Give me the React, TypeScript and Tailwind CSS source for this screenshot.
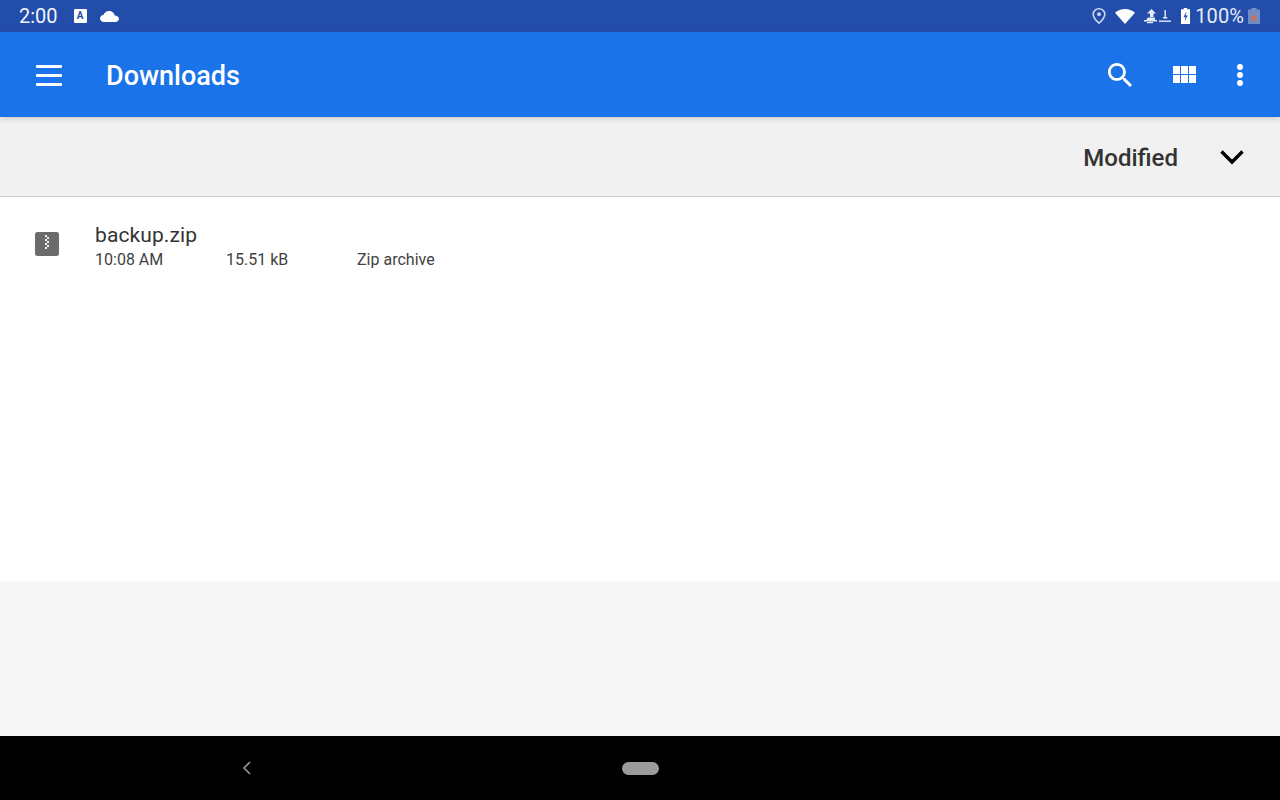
const font = { roboto: 'font-["Roboto",sans-serif]' };

function StatusIcons() {
  return (
    <div className="flex items-center">
      {/* location pin */}
      <svg width="14" height="16" viewBox="0 0 14 16" className="mr-[9px]" fill="none">
        <path d="M7 .8C3.700.8 1.200 3.200 1.200 6.200 1.200 10 7 15.200 7 15.200s5.800-5.200 5.800-9C12.800 3.200 10.300.8 7 .8z" stroke="#cdd8ee" strokeWidth="1.600" />
        <circle cx="7" cy="6.200" r="1.900" fill="#cdd8ee" />
      </svg>
      {/* wifi */}
      <svg width="20" height="15" viewBox="0 0 20 15" className="mr-[8px]">
        <path d="M0 3.800C2.600 1.400 6.100 0 10 0s7.400 1.400 10 3.800L10 15z" fill="#fff" />
      </svg>
      {/* data up / down */}
      <svg width="28" height="16" viewBox="0 0 28 16" className="mr-[10px]" fill="#e6ebf6">
        <path d="M8.500 1l4.500 4.500h-2.500V9H7V5.500H4z" />
        <path d="M1 12h2.500c.3-1.500 1-2.500 2-2.500h6.500V12h2v1.500H1z" />
        <rect x="4" y="14" width="6" height="1.200" />
        <rect x="21.500" y="2" width="1.400" height="8" />
        <rect x="20" y="9" width="4.300" height="1.500" />
        <rect x="16" y="12.500" width="12" height="1.400" />
      </svg>
      {/* charging battery */}
      <svg width="9" height="16" viewBox="0 0 9 16" className="mr-[5px]">
        <path d="M2.800 0h3.400v1.300H9V16H0V1.300h2.800z" fill="#fff" />
        <path d="M5.500 3.500L2.500 9h2l-.7 4L6.800 7.500H4.700z" fill="#234dab" />
      </svg>
      <span className={`${font.roboto} mr-[4px] text-[20px] leading-none tracking-[0.1px] text-[#e6ebf6]`}>100%</span>
      {/* second battery */}
      <svg width="12" height="16" viewBox="0 0 12 16">
        <path d="M3.500 0h5v1.500H12V16H0V1.500h3.500z" fill="#6f8cc4" />
        <path d="M4 7.500l4 5M8 7.500l-4 5" stroke="#e8683a" strokeWidth="1.600" />
      </svg>
    </div>
  );
}

function StatusBar() {
  return (
    <div className="flex h-8 shrink-0 items-center justify-between bg-[#234dab] pl-[19px] pr-[20px]">
      <div className="flex items-center">
        <span className={`${font.roboto} mr-[16px] text-[20px] leading-none text-[#f2f4fa]`}>2:00</span>
        {/* keyboard badge */}
        <span className={`${font.roboto} mr-[13px] flex h-[14px] w-[13px] items-center justify-center rounded-[1px] bg-white text-[10px] font-bold leading-none text-[#234dab]`}>
          A
        </span>
        {/* cloud */}
        <svg width="19" height="11" viewBox="0 0 19 11">
          <path d="M4 11C1.800 11 0 9.400 0 7.500 0 5.600 1.600 4.200 3.400 4 4.200 1.700 6.400 0 9 0c3 0 5.300 2 5.700 4.400C17 4.500 19 5.900 19 7.800 19 9.600 17.300 11 15.300 11z" fill="#fff" />
        </svg>
      </div>
      <StatusIcons />
    </div>
  );
}

function AppBar() {
  return (
    <div className="relative z-10 flex h-[85px] shrink-0 items-center bg-[#1a73e8] pl-[36px] pr-[37px] text-white shadow-[0_2px_5px_rgba(0,0,0,0.15)]">
      <div className="mt-[1px] flex w-[26px] shrink-0 flex-col gap-[6px]">
        <span className="h-[3px] rounded-[1px] bg-white" />
        <span className="h-[3px] rounded-[1px] bg-white" />
        <span className="h-[3px] rounded-[1px] bg-white" />
      </div>
      <h1 className={`${font.roboto} ml-[44px] mt-[4px] flex-1 text-[27px] font-medium leading-none`}>Downloads</h1>
      <svg width="24" height="24" viewBox="3 3 17.5 17.5" fill="#fff" className="mr-[41px]">
        <path d="M15.500 14h-.79l-.28-.27C15.410 12.590 16 11.110 16 9.500 16 5.910 13.090 3 9.500 3S3 5.910 3 9.500 5.910 16 9.500 16c1.610 0 3.090-.59 4.230-1.570l.27.28v.79l5 4.990L20.490 19l-4.990-5zm-6 0C7.010 14 5 11.990 5 9.500S7.010 5 9.500 5 14 7.010 14 9.500 11.990 14 9.500 14z" />
      </svg>
      <svg width="23" height="17" viewBox="0 0 23 17" fill="#fff" className="mr-[41px]">
        <rect x="0" y="0" width="7" height="8" />
        <rect x="8" y="0" width="7" height="8" />
        <rect x="16" y="0" width="7" height="8" />
        <rect x="0" y="9" width="7" height="8" />
        <rect x="8" y="9" width="7" height="8" />
        <rect x="16" y="9" width="7" height="8" />
      </svg>
      <div className="flex flex-col gap-[2px]">
        <span className="h-[6px] w-[6px] rounded-full bg-white" />
        <span className="h-[6px] w-[6px] rounded-full bg-white" />
        <span className="h-[6px] w-[6px] rounded-full bg-white" />
      </div>
    </div>
  );
}

function SortBar() {
  return (
    <div className="flex h-[80px] shrink-0 items-center justify-end border-b border-[#cfcfcf] bg-[#f1f1f1] pr-[35px]">
      <span className={`${font.roboto} mr-[41px] mt-[2px] text-[24px] font-medium leading-none text-[#333]`}>Modified</span>
      <svg width="26" height="16" viewBox="0 0 26 16" fill="none">
        <path d="M2.500 2.500L13 13 23.500 2.500" stroke="#000" strokeWidth="3.400" />
      </svg>
    </div>
  );
}

function ZipIcon() {
  return (
    <svg width="24" height="24" viewBox="0 0 24 24" className="mt-[9px] shrink-0">
      <rect width="24" height="24" rx="2.500" fill="#6b6b6b" />
      <g fill="#f2f2f2">
        <rect x="10" y="3" width="2" height="2" />
        <rect x="12" y="5" width="2" height="2" />
        <rect x="10" y="7" width="2" height="2" />
        <rect x="12" y="9" width="2" height="2" />
        <rect x="10" y="11" width="2" height="2" />
        <rect x="12" y="13" width="2" height="2" />
        <rect x="10" y="15" width="2" height="2" />
      </g>
    </svg>
  );
}

function FileRow() {
  return (
    <div className="flex items-start pl-[35px] pt-[26px]">
      <ZipIcon />
      <div className={`${font.roboto} ml-[36px] text-[#333]`}>
        <div className="text-[21px] leading-[24px] tracking-[0.1px]">backup.zip</div>
        <div className="mt-[3px] flex text-[16px] leading-[20px] tracking-[0.01px] text-[#424242]">
          <span className="w-[131px]">10:08 AM</span>
          <span className="w-[131px]">15.51 kB</span>
          <span>Zip archive</span>
        </div>
      </div>
    </div>
  );
}

function NavBar() {
  return (
    <div className="grid h-16 shrink-0 grid-cols-[495px_1fr] items-center bg-black pl-[242px]">
      <svg width="10" height="14" viewBox="0 0 10 14" fill="none">
        <path d="M8 1L2 7l6 6" stroke="#9a9a9a" strokeWidth="1.600" />
      </svg>
      <div className="ml-[-115px] h-[13px] w-[37px] rounded-full bg-[#9b9b9b]" />
    </div>
  );
}

export default function App() {
  return (
    <div className="flex h-[800px] w-[1280px] flex-col overflow-hidden bg-[#f7f7f7]">
      <StatusBar />
      <AppBar />
      <SortBar />
      <div className="h-[384px] shrink-0 bg-white">
        <FileRow />
      </div>
      <div className="flex-1" />
      <NavBar />
    </div>
  );
}
